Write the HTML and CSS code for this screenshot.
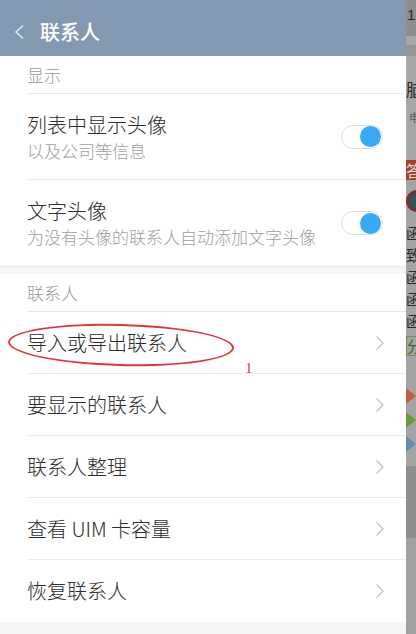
FILE: index.html
```html
<!DOCTYPE html>
<html lang="zh-CN">
<head>
<meta charset="utf-8">
<title>联系人</title>
<link rel="stylesheet" href="styles.css">
</head>
<body>
<div class="screen">
  <div class="panel">
    <header class="topbar">
      <svg class="back" width="12" height="16" viewBox="0 0 12 16"><polyline points="10,1.5 3,8 10,14.5" fill="none" stroke="#e6ecf2" stroke-width="1.4"/></svg>
      <span class="title">联系人</span>
    </header>

    <div class="section-head">显示</div>
    <div class="row row-switch">
      <div class="texts">
        <div class="main">列表中显示头像</div>
        <div class="sub">以及公司等信息</div>
      </div>
      <div class="toggle"><span class="knob"></span></div>
    </div>
    <div class="row row-switch last">
      <div class="texts">
        <div class="main">文字头像</div>
        <div class="sub">为没有头像的联系人自动添加文字头像</div>
      </div>
      <div class="toggle"><span class="knob"></span></div>
    </div>
    <div class="gap"></div>

    <div class="section-head">联系人</div>
    <div class="row row-nav annotated">
      <div class="main">导入或导出联系人</div>
      <svg class="chev" width="10" height="16" viewBox="0 0 10 16"><polyline points="1.5,1.5 8,8 1.5,14.5" fill="none" stroke="#bdbdbd" stroke-width="1.1"/></svg>
      <span class="circle-mark"></span>
      <span class="num-mark">1</span>
    </div>
    <div class="row row-nav">
      <div class="main">要显示的联系人</div>
      <svg class="chev" width="10" height="16" viewBox="0 0 10 16"><polyline points="1.5,1.5 8,8 1.5,14.5" fill="none" stroke="#bdbdbd" stroke-width="1.1"/></svg>
    </div>
    <div class="row row-nav">
      <div class="main">联系人整理</div>
      <svg class="chev" width="10" height="16" viewBox="0 0 10 16"><polyline points="1.5,1.5 8,8 1.5,14.5" fill="none" stroke="#bdbdbd" stroke-width="1.1"/></svg>
    </div>
    <div class="row row-nav">
      <div class="main">查看 UIM 卡容量</div>
      <svg class="chev" width="10" height="16" viewBox="0 0 10 16"><polyline points="1.5,1.5 8,8 1.5,14.5" fill="none" stroke="#bdbdbd" stroke-width="1.1"/></svg>
    </div>
    <div class="row row-nav last">
      <div class="main">恢复联系人</div>
      <svg class="chev" width="10" height="16" viewBox="0 0 10 16"><polyline points="1.5,1.5 8,8 1.5,14.5" fill="none" stroke="#bdbdbd" stroke-width="1.1"/></svg>
    </div>
    <div class="tail"></div>
  </div>

  <div class="behind">
    <div class="b-top">12</div>
    <div class="b-band1"></div>
    <div class="b-band2"></div>
    <div class="b-block">
      <div class="b-big">脑</div>
      <div class="b-small">电</div>
    </div>
    <div class="b-red">答</div>
    <div class="b-avatar-row"><span class="b-avatar"></span></div>
    <div class="b-lines">
      <div>函</div><div>致</div><div>函</div><div>函</div><div>函</div>
    </div>
    <div class="b-tag">分</div>
    <div class="b-tris">
      <span class="tri t-o"></span>
      <span class="tri t-g"></span>
      <span class="tri t-b"></span>
    </div>
    <div class="b-dark"></div>
    <div class="b-rest"></div>
  </div>
</div>
</body>
</html>
```

FILE: styles.css
```css
* { box-sizing: border-box; }
html, body { margin: 0; padding: 0; }
body {
  width: 416px;
  height: 634px;
  overflow: hidden;
  font-family: "Noto Sans CJK SC", "Noto Sans", sans-serif;
  background: #fff;
}
.screen {
  display: flex;
  width: 416px;
  height: 634px;
}
.panel {
  width: 406px;
  flex: none;
  display: flex;
  flex-direction: column;
  background: #fff;
}
.topbar {
  height: 56px;
  background: #8399b1;
  display: flex;
  align-items: center;
  padding-left: 13px;
  padding-top: 7px;
}
.back { display: block; }
.title {
  margin-left: 15px;
  color: #fff;
  font-size: 20px;
  font-weight: 500;
  line-height: 26px;
}
.section-head {
  height: 38px;
  margin-left: 27px;
  border-bottom: 1px solid #e9e9e9;
  display: flex;
  align-items: center;
  font-size: 17px;
  font-weight: 300;
  color: #999;
  line-height: 22px;
}
.row {
  margin-left: 27px;
  padding-right: 23px;
  border-bottom: 1px solid #ebebeb;
  display: flex;
  align-items: center;
  justify-content: space-between;
  position: relative;
}
.row.last { border-bottom: none; }
.row-switch { height: 86px; }
.row-nav { height: 62px; }
.texts { display: flex; flex-direction: column; gap: 2px; }
.main {
  font-size: 20px;
  font-weight: 300;
  line-height: 26px;
  color: #2c2c2c;
}
.sub {
  font-size: 17px;
  font-weight: 300;
  line-height: 22px;
  color: #9e9e9e;
}
.toggle {
  width: 42px;
  height: 24px;
  border: 1px solid #dedede;
  border-radius: 12px;
  background: #fff;
  display: flex;
  align-items: center;
  justify-content: flex-end;
  padding-right: 1px;
}
.knob {
  width: 21px;
  height: 21px;
  border-radius: 50%;
  background: #36aaf5;
}
.chev { display: block; margin-right: -2px; }
.gap {
  height: 8px;
  border-top: 1px solid #ebebeb;
  background: #f6f6f6;
}
.tail {
  flex: 1;
  background: #f6f6f6;
}
.circle-mark {
  position: absolute;
  left: -19px;
  top: 12px;
  width: 226px;
  height: 42px;
  border: 2.5px solid #e0363a;
  border-radius: 50%;
  transform: rotate(1.5deg);
}
.num-mark {
  position: absolute;
  left: 218px;
  top: 47px;
  font-family: "Liberation Serif", serif;
  font-size: 15px;
  line-height: 18px;
  color: #d8403a;
}

/* dimmed app behind */
.behind {
  width: 10px;
  flex: none;
  overflow: hidden;
  display: flex;
  flex-direction: column;
  background: #a4a4a4;
  font-family: "Noto Sans CJK SC", sans-serif;
  white-space: nowrap;
}
.b-top {
  height: 36px;
  background: #8d8d8d;
  color: #2a2a2a;
  font-family: "Liberation Sans", sans-serif;
  font-size: 15px;
  line-height: 16px;
  padding-top: 7px;
  padding-left: 1px;
}
.b-band1 { height: 9px; background: #a6a6a6; }
.b-band2 { height: 11px; background: #959595; }
.b-block {
  height: 104px;
  background: #a7a7a7;
  padding-top: 22px;
}
.b-big { font-size: 18px; line-height: 22px; color: #2d2d2d; }
.b-small { font-size: 11px; line-height: 14px; color: #5a5a5a; margin-top: 10px; padding-left: 3px; }
.b-red {
  height: 20px;
  background: #a8402f;
  color: #ddd;
  font-size: 16px;
  line-height: 20px;
}
.b-avatar-row { height: 42px; padding-top: 10px; }
.b-avatar {
  display: block;
  width: 22px;
  height: 22px;
  border-radius: 50%;
  background: #33555e;
  border: 3px solid #7d2f33;
}
.b-lines { font-size: 15px; line-height: 22px; color: #2a2a2a; }
.b-tag {
  margin-top: 4px;
  height: 20px;
  font-size: 15px;
  line-height: 18px;
  color: #3e5e2e;
  border-top: 1px solid #6f8f4e;
  border-bottom: 1px solid #6f8f4e;
  border-left: 1px solid #6f8f4e;
}
.b-tris {
  display: flex;
  flex-direction: column;
  gap: 8px;
  padding-top: 32px;
  height: 110px;
}
.tri {
  display: block;
  width: 0;
  height: 0;
  border-top: 8px solid transparent;
  border-bottom: 8px solid transparent;
  border-left: 10px solid #c0603a;
}
.t-g { border-left-color: #6e9a3a; }
.t-b { border-left-color: #5e8eb0; }
.b-dark { height: 72px; background: #8e8e8e; }
.b-rest { flex: 1; background: #a1a1a1; }
```
